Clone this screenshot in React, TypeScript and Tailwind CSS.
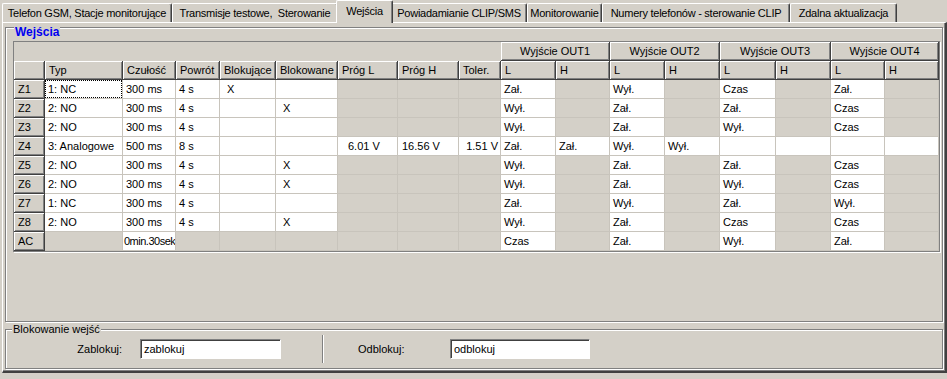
import React from 'react'
import clsx from 'clsx'

const tabs = [
  { label: 'Telefon GSM, Stacje monitorujące', cls: 'w-[170px]' },
  { label: 'Transmisje testowe,  Sterowanie', cls: 'w-[166px]' },
  { label: 'Wejścia', cls: 'w-[57px]', active: true },
  { label: 'Powiadamianie CLIP/SMS', cls: 'w-[136px]' },
  { label: 'Monitorowanie', cls: 'w-[75px]' },
  { label: 'Numery telefonów - sterowanie CLIP', cls: 'w-[188px]' },
  { label: 'Zdalna aktualizacja', cls: 'w-[107px]' },
]

const headers = ['', 'Typ', 'Czułość', 'Powrót', 'Blokujące', 'Blokowane', 'Próg L', 'Próg H', 'Toler.', 'L', 'H', 'L', 'H', 'L', 'H', 'L', 'H']

// '#' = disabled (grey) cell, anything else = editable white cell
const rows: { id: string; cells: string[] }[] = [
  { id: 'Z1', cells: ['1: NC', '300 ms', '4 s', 'X', '', '#', '#', '#', 'Zał.', '#', 'Wył.', '#', 'Czas', '#', 'Zał.', '#'] },
  { id: 'Z2', cells: ['2: NO', '300 ms', '4 s', '', 'X', '#', '#', '#', 'Wył.', '#', 'Zał.', '#', 'Zał.', '#', 'Czas', '#'] },
  { id: 'Z3', cells: ['2: NO', '300 ms', '4 s', '', '', '#', '#', '#', 'Wył.', '#', 'Zał.', '#', 'Wył.', '#', 'Czas', '#'] },
  { id: 'Z4', cells: ['3: Analogowe', '500 ms', '8 s', '', '', '6.01 V', '16.56 V', '1.51 V', 'Zał.', 'Zał.', 'Wył.', 'Wył.', '', '', '', ''] },
  { id: 'Z5', cells: ['2: NO', '300 ms', '4 s', '', 'X', '#', '#', '#', 'Wył.', '#', 'Zał.', '#', 'Zał.', '#', 'Czas', '#'] },
  { id: 'Z6', cells: ['2: NO', '300 ms', '4 s', '', 'X', '#', '#', '#', 'Wył.', '#', 'Zał.', '#', 'Wył.', '#', 'Czas', '#'] },
  { id: 'Z7', cells: ['1: NC', '300 ms', '4 s', '', '', '#', '#', '#', 'Zał.', '#', 'Wył.', '#', 'Zał.', '#', 'Wył.', '#'] },
  { id: 'Z8', cells: ['2: NO', '300 ms', '4 s', '', 'X', '#', '#', '#', 'Wył.', '#', 'Zał.', '#', 'Czas', '#', 'Czas', '#'] },
  { id: 'AC', cells: ['#', '0min.30sek', '#', '#', '#', '#', '#', '#', 'Czas', '#', 'Zał.', '#', 'Wył.', '#', 'Zał.', '#'] },
]

const raised = 'bg-[#d4d0c8] border-r border-b border-[#404040] shadow-[inset_1px_1px_0_#fff,inset_-1px_-1px_0_#808080]'

function cellPad(col: number) {
  if (col === 3 || col === 4) return 'pl-[7px]'
  if (col === 5) return 'pl-[10px]'
  if (col === 6) return 'pl-[4px]'
  if (col === 7) return 'justify-end pr-[2px]'
  return 'pl-[3px]'
}

function GroupBox({ title, bold, className, titleCls, children }: { title: string; bold?: boolean; className?: string; titleCls?: string; children?: React.ReactNode }) {
  return (
    <div className={clsx('relative border border-[#808080] shadow-[inset_1px_1px_0_#fff,1px_1px_0_#fff]', className)}>
      <span className={clsx('absolute px-[1px] bg-[#d4d0c8] leading-[13px]', bold ? 'text-[12px] font-bold text-[#0000f0]' : 'text-[11px] text-black', titleCls)}>
        {title}
      </span>
      {children}
    </div>
  )
}

function Field({ value, cls }: { value: string; cls: string }) {
  return (
    <div className={clsx('h-[20px] bg-white border border-t-[#808080] border-l-[#808080] border-b-white border-r-white shadow-[inset_1px_1px_0_#404040] pl-[3px] flex items-center', cls)}>
      {value}
    </div>
  )
}

export default function App() {
  return (
    <div className="w-[947px] h-[379px] bg-[#d4d0c8] overflow-hidden font-['Liberation_Sans',Arial,sans-serif] text-[11px] text-black">
      {/* tab strip */}
      <div className="h-[22px] flex items-end pl-[2px] tracking-[-0.25px]">
        {tabs.map((t) => (
          <div
            key={t.label}
            className={clsx(
              'flex items-center justify-center whitespace-pre bg-[#d4d0c8] border-t border-l border-white border-r border-r-[#404040] shadow-[inset_-1px_0_0_#808080] rounded-t-[2px]',
              t.cls,
              t.active ? 'h-[23px] -mx-[2px] -mb-[1px] pb-[1px] relative z-10' : 'h-[19px]'
            )}
          >
            {t.label}
          </div>
        ))}
      </div>

      {/* tab page */}
      <div className="ml-[2px] w-[945px] border-t border-l border-white border-r-2 border-b-2 border-r-[#404040] border-b-[#404040] shadow-[inset_-1px_-1px_0_#808080] px-[2px] pb-[2px] flex flex-col">
        <GroupBox title="Wejścia" bold className="mt-[4px] h-[295px] pl-[7px] pr-[2px] pt-[13px]" titleCls="left-[8px] -top-[2px]">
          <div className="w-[927px] h-[211px] border border-[#808080] shadow-[1px_1px_0_#fff] bg-[#d4d0c8]">
            <div className="grid grid-cols-[31px_78px_53px_44px_56px_62px_60px_61px_42px_55px_54px_55px_55px_56px_55px_54px_54px] auto-rows-[19px]">
              <div className="col-span-9" />
              {['Wyjście OUT1', 'Wyjście OUT2', 'Wyjście OUT3', 'Wyjście OUT4'].map((o) => (
                <div key={o} className={clsx(raised, 'col-span-2 flex items-center justify-center')}>
                  {o}
                </div>
              ))}

              {headers.map((h, i) => (
                <div key={i} className={clsx(raised, 'flex items-center pl-[4px]')}>
                  {h}
                </div>
              ))}

              {rows.map((r) => (
                <React.Fragment key={r.id}>
                  <div className={clsx(raised, 'flex items-center pl-[4px]')}>{r.id}</div>
                  {r.cells.map((c, i) => (
                    <div
                      key={i}
                      className={clsx(
                        'relative flex items-center overflow-hidden whitespace-nowrap border-r border-b border-[#c8c4bc]',
                        c === '#' ? 'bg-[#d4d0c8]' : 'bg-white',
                        r.id === 'AC' && i === 1 ? 'pl-[1px] tracking-[-0.5px]' : cellPad(i)
                      )}
                    >
                      {c !== '#' && c}
                      {r.id === 'Z1' && i === 0 && (
                        <span className="absolute inset-0 border border-dotted border-black" />
                      )}
                    </div>
                  ))}
                </React.Fragment>
              ))}
            </div>
          </div>
        </GroupBox>

        <GroupBox title="Blokowanie wejść" className="mt-[7px] h-[40px] flex items-center" titleCls="left-[6px] -top-[7px]">
          <div className="w-[116px] text-right">Zablokuj:</div>
          <Field value="zablokuj" cls="ml-[18px] w-[141px]" />
          <div className="ml-[41px] w-[2px] h-[28px] border-l border-l-[#808080] border-r border-r-white" />
          <div className="ml-[34px] w-[92px]">Odblokuj:</div>
          <Field value="odblokuj" cls="w-[140px]" />
        </GroupBox>
      </div>
    </div>
  )
}
